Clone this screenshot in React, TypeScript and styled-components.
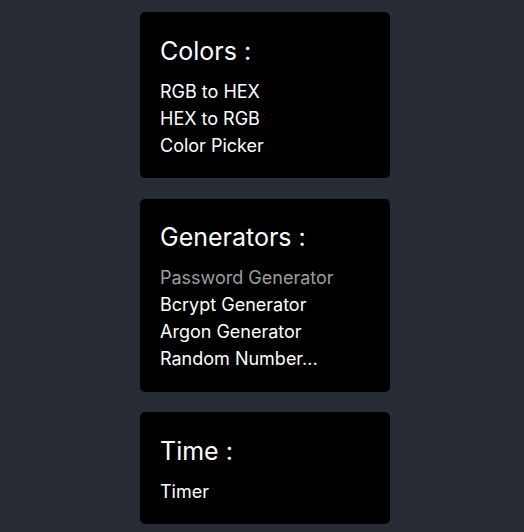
import React from 'react'
import styled, { createGlobalStyle } from 'styled-components'

const GlobalStyle = createGlobalStyle`
  html, body {
    margin: 0;
    padding: 0;
    background: #282c34;
  }
  body {
    font-family: Inter, "Noto Sans", sans-serif;
    color: #ffffff;
  }
`;

const Page = styled.div`
  display: flex;
  flex-direction: column;
  align-items: center;
  gap: 20.5px;
  padding: 12px 0 12px 6px;
  min-height: 532px;
  box-sizing: border-box;
`;

const Card = styled.section`
  width: 250px;
  box-sizing: border-box;
  padding: 20.75px 20px 19.25px;
  background: #000000;
  border-radius: 5px;
`;

const Title = styled.h2`
  margin: 0 0 9px;
  font-size: 25px;
  font-weight: 400;
  line-height: 36px;
`;

const ToolList = styled.ul`
  list-style: none;
  margin: 0;
  padding: 0;
`;

const ToolItem = styled.li<{ $muted?: boolean }>`
  font-size: 18px;
  line-height: 27px;
  color: ${(p) => (p.$muted ? '#9d9d9d' : '#ffffff')};
  white-space: nowrap;
  cursor: pointer;
`;

type Section = {
  title: string;
  tools: string[];
};

const sections: Section[] = [
  { title: 'Colors :', tools: ['RGB to HEX', 'HEX to RGB', 'Color Picker'] },
  {
    title: 'Generators :',
    tools: ['Password Generator', 'Bcrypt Generator', 'Argon Generator', 'Random Number...'],
  },
  { title: 'Time :', tools: ['Timer'] },
];

function App() {
  return (
    <>
      <GlobalStyle />
      <Page>
        {sections.map((section) => (
          <Card key={section.title}>
            <Title>{section.title}</Title>
            <ToolList>
              {section.tools.map((tool) => (
                <ToolItem key={tool} $muted={tool === 'Password Generator'}>
                  {tool}
                </ToolItem>
              ))}
            </ToolList>
          </Card>
        ))}
      </Page>
    </>
  );
}

export default App;
